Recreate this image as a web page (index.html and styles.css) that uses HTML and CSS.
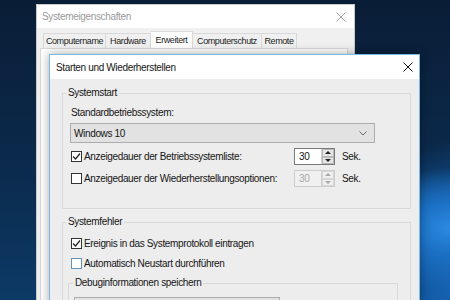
FILE: index.html
```html
<!DOCTYPE html>
<html lang="de">
<head>
    <meta charset="UTF-8">
    <title>Starten und Wiederherstellen</title>
    <link rel="stylesheet" href="styles.css">
</head>
<body>
    <div class="desktop">
        <!-- Hintergrundfenster: Systemeigenschaften -->
        <div class="window back">
            <div class="titlebar">
                <span class="title">Systemeigenschaften</span>
                <svg class="close" width="10" height="10" viewBox="0 0 10 10"><path d="M0.5 0.5 L9.5 9.5 M9.5 0.5 L0.5 9.5" stroke="#a0a0a0" stroke-width="1"/></svg>
            </div>
            <div class="tabs">
                <div class="tab tab-a">Computername</div>
                <div class="tab tab-b">Hardware</div>
                <div class="tab tab-c active">Erweitert</div>
                <div class="tab tab-d">Computerschutz</div>
                <div class="tab tab-e">Remote</div>
            </div>
            <div class="tabpanel"></div>
        </div>

        <!-- Vordergrund: Starten und Wiederherstellen -->
        <div class="window front">
            <div class="titlebar">
                <span class="title">Starten und Wiederherstellen</span>
                <svg class="close" width="10" height="10" viewBox="0 0 10 10"><path d="M0.5 0.5 L9.5 9.5 M9.5 0.5 L0.5 9.5" stroke="#111" stroke-width="1"/></svg>
            </div>
            <div class="content">
                <div class="group">
                    <span class="legend">Systemstart</span>
                    <div class="label">Standardbetriebssystem:</div>
                    <div class="combo">
                        <span>Windows 10</span>
                        <svg width="8" height="5" viewBox="0 0 8 5"><path d="M0.5 0.5 L4 4 L7.5 0.5" fill="none" stroke="#666" stroke-width="1"/></svg>
                    </div>
                    <div class="row">
                        <span class="check"><svg width="9" height="9" viewBox="0 0 9 9"><path d="M1 4.5 L3.5 7 L8 1.5" fill="none" stroke="#222" stroke-width="1.2"/></svg></span>
                        <span class="row-label">Anzeigedauer der Betriebssystemliste:</span>
                        <div class="spin">
                            <span class="spin-value">30</span>
                            <span class="spin-btns">
                                <span class="arrow up"></span>
                                <span class="arrow down"></span>
                            </span>
                        </div>
                        <span class="unit">Sek.</span>
                    </div>
                    <div class="row">
                        <span class="check"></span>
                        <span class="row-label">Anzeigedauer der Wiederherstellungsoptionen:</span>
                        <div class="spin disabled">
                            <span class="spin-value">30</span>
                            <span class="spin-btns">
                                <span class="arrow up"></span>
                                <span class="arrow down"></span>
                            </span>
                        </div>
                        <span class="unit">Sek.</span>
                    </div>
                </div>

                <div class="group second">
                    <span class="legend">Systemfehler</span>
                    <div class="row first">
                        <span class="check"><svg width="9" height="9" viewBox="0 0 9 9"><path d="M1 4.5 L3.5 7 L8 1.5" fill="none" stroke="#222" stroke-width="1.2"/></svg></span>
                        <span class="row-label">Ereignis in das Systemprotokoll eintragen</span>
                    </div>
                    <div class="row tight">
                        <span class="check hover"></span>
                        <span class="row-label">Automatisch Neustart durchführen</span>
                    </div>
                    <div class="subgroup">
                        <span class="legend">Debuginformationen speichern</span>
                        <div class="combo small"></div>
                    </div>
                </div>
            </div>
        </div>
    </div>
</body>
</html>
```

FILE: styles.css
```css
body {
    margin: 0;
    font-family: "Liberation Sans", Arial, sans-serif;
    font-size: 10px;
    letter-spacing: -0.35px;
    color: #151515;
}
.desktop {
    position: relative;
    width: 450px;
    height: 300px;
    overflow: hidden;
    background:
        radial-gradient(ellipse 90px 60px at 450px 228px, #2b8ae0 0%, #1b6fc2 45%, rgba(21, 96, 170, 0) 100%),
        radial-gradient(ellipse 140px 150px at 470px 290px, #1766b8 0%, #12569c 50%, rgba(14, 60, 110, 0) 100%),
        linear-gradient(to bottom, #0a1d36 0%, #0b2a4c 55%, #0c3a66 100%);
}

/* Fenster */
.window {
    position: absolute;
    background: #f0f0f0;
}
.window.back {
    left: 36px;
    top: 4px;
    width: 319px;
    height: 310px;
    border: 1px solid #c9c9c9;
    box-sizing: border-box;
}
.window.front {
    left: 49px;
    top: 54px;
    width: 371px;
    height: 260px;
    border: 1px solid #7cb8e4;
    box-sizing: border-box;
    box-shadow: 0 0 10px rgba(0, 0, 0, 0.35);
    background: #ededed;
}
.titlebar {
    display: flex;
    align-items: center;
    justify-content: space-between;
    height: 24px;
    background: #fff;
    padding: 0 7px 0 6px;
}
.back .titlebar {
    height: 23px;
    color: #9a9a9a;
    padding-left: 5px;
    padding-right: 8px;
}
.front .titlebar {
    padding-right: 6px;
}

/* Tabs */
.tabs {
    display: flex;
    align-items: flex-end;
    padding-left: 6px;
    margin-top: 4px;
    height: 16px;
    font-size: 9px;
    letter-spacing: -0.4px;
}
.tab {
    height: 15px;
    line-height: 15px;
    text-align: center;
    border: 1px solid #d9d9d9;
    border-bottom: none;
    box-sizing: border-box;
    background: #f0f0f0;
    color: #222;
    white-space: nowrap;
}
.tab + .tab {
    border-left: none;
}
.tab.active {
    height: 17px;
    background: #fff;
    line-height: 16px;
}
.tab-a { width: 63px; }
.tab-b { width: 45px; }
.tab-c { width: 42px; }
.tab-d { width: 69px; }
.tab-e { width: 35px; }
.tabpanel {
    margin: 0 6px 0 3px;
    height: 270px;
    background: #fff;
    border: 1px solid #d9d9d9;
}

/* Inhalt */
.content {
    padding-top: 14px;
}
.group {
    margin: 0 8px 0 12px;
    border: 1px solid #d8d8d8;
    padding: 0 8px 21px 8px;
}
.group.second {
    margin-top: 13px;
    padding-bottom: 20px;
}
.legend {
    display: block;
    width: fit-content;
    margin: -8px 0 0 -5px;
    padding: 0 2px;
    line-height: 14px;
    background: #ededed;
}
.label {
    margin-top: 6px;
    line-height: 14px;
}
.combo {
    display: flex;
    align-items: center;
    justify-content: space-between;
    width: 305px;
    height: 20px;
    margin-top: 3px;
    margin-left: -1px;
    padding: 0 7px 0 3px;
    box-sizing: border-box;
    background: #e2e2e2;
    border: 1px solid #adadad;
}
.row {
    display: grid;
    grid-template-columns: 13px 210px 41px auto;
    align-items: center;
    height: 17px;
    margin-top: 5px;
}
.row.first {
    margin-top: 6px;
}
.row.tight {
    margin-top: 3px;
}
.check {
    display: flex;
    align-items: center;
    justify-content: center;
    width: 11px;
    height: 11px;
    box-sizing: border-box;
    border: 1px solid #333;
    background: #fff;
}
.check.hover {
    border-color: #5f93bb;
}
.row-label {
    white-space: nowrap;
}
.spin {
    display: flex;
    height: 17px;
    box-sizing: border-box;
    border: 1px solid #7a7a7a;
    background: #fff;
}
.spin-value {
    flex: 1;
    padding-left: 4px;
    line-height: 15px;
}
.spin-btns {
    display: flex;
    flex-direction: column;
    width: 12px;
    border-left: 1px solid #cfcfcf;
    background: #f0f0f0;
}
.arrow {
    flex: 1;
    display: flex;
    align-items: center;
    justify-content: center;
    border: 1px solid #b8b8b8;
    background: #e6e6e6;
}
.arrow::before {
    content: "";
    border-left: 3px solid transparent;
    border-right: 3px solid transparent;
}
.arrow.up::before {
    border-bottom: 3px solid #222;
}
.arrow.down::before {
    border-top: 3px solid #222;
}
.spin.disabled {
    border-color: #cccccc;
    background: #f0f0f0;
    color: #a8a8a8;
}
.spin.disabled .arrow {
    border-color: #d6d6d6;
    background: #f0f0f0;
}
.spin.disabled .arrow.up::before {
    border-bottom-color: #a8a8a8;
}
.spin.disabled .arrow.down::before {
    border-top-color: #a8a8a8;
}
.unit {
    padding-left: 7px;
}
.subgroup {
    margin: 11px 4px 0 -3px;
    border: 1px solid #d8d8d8;
    padding: 0 4px 10px 4px;
}
.subgroup .legend {
    margin-left: 0;
}
.combo.small {
    width: 206px;
    margin-top: 7px;
    margin-left: 1px;
}
```
